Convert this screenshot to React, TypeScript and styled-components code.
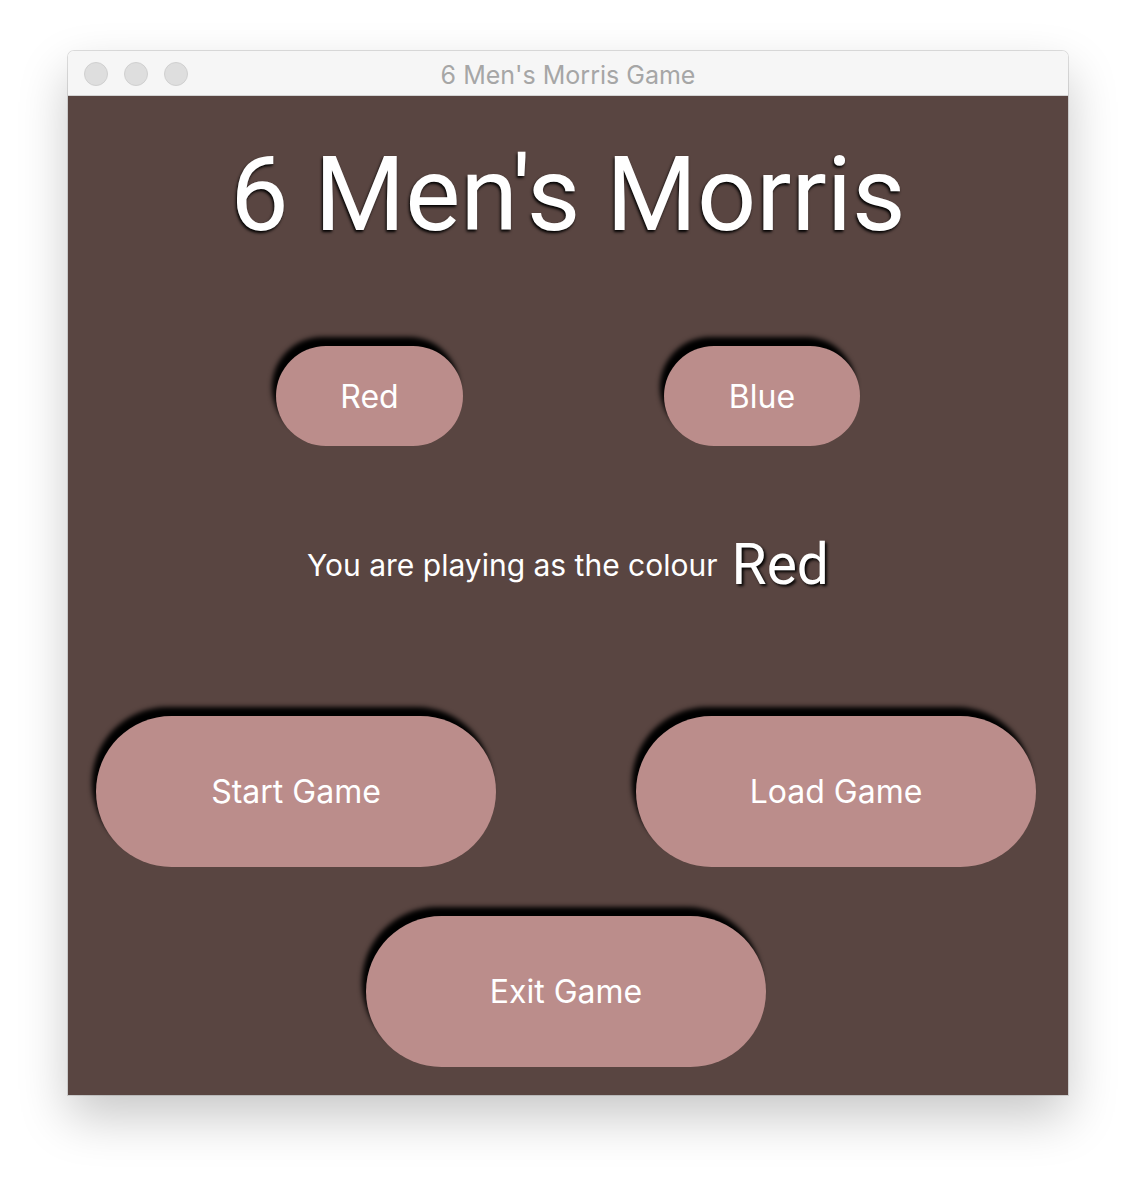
import * as React from "react";
import styled, { createGlobalStyle } from "styled-components";

const GlobalStyle = createGlobalStyle`
  html, body {
    margin: 0;
    padding: 0;
    background: #ffffff;
  }
  body {
    font-family: Inter, "Noto Sans", sans-serif;
  }
`;

const Page = styled.div`
  width: 1136px;
  height: 1180px;
  padding: 51px 0 0 68px;
  box-sizing: border-box;
`;

const Window = styled.div`
  width: 1000px;
  display: flex;
  flex-direction: column;
  border-radius: 6px 6px 0 0;
  box-shadow: 0 22px 50px rgba(0, 0, 0, 0.22), 0 0 0 1px rgba(0, 0, 0, 0.12);
`;

const TitleBar = styled.div`
  position: relative;
  height: 44px;
  display: flex;
  align-items: center;
  justify-content: center;
  background: #f6f6f6;
  border-bottom: 1px solid #d4d4d4;
  border-radius: 6px 6px 0 0;
`;

const Lights = styled.div`
  position: absolute;
  left: 16px;
  top: 11px;
  display: flex;
  gap: 16px;
`;

const Light = styled.span`
  width: 22px;
  height: 22px;
  border-radius: 50%;
  background: #dedede;
  border: 1px solid #d0d0d0;
`;

const WindowTitle = styled.div`
  font-family: Inter, sans-serif;
  font-size: 25px;
  color: #a6a6a6;
  margin-top: 3px;
`;

const Content = styled.div`
  height: 999px;
  background: #594541;
  display: flex;
  flex-direction: column;
  align-items: center;
  box-sizing: border-box;
  padding-top: 44px;
`;

const Heading = styled.h1`
  margin: 0;
  font-family: Roboto, "Liberation Sans", sans-serif;
  font-weight: 400;
  font-size: 104px;
  line-height: 110px;
  color: #ffffff;
  text-shadow: -1px 2px 3px rgba(0, 0, 0, 1);
`;

const ColourRow = styled.div`
  margin-top: 96px;
  display: flex;
  gap: 201px;
`;

const Pill = styled.button<{ $w: number; $h: number }>`
  width: ${p => p.$w}px;
  height: ${p => p.$h}px;
  border: none;
  border-radius: ${p => p.$h / 2}px;
  background: #bb8d8b;
  color: #ffffff;
  font-family: Inter, sans-serif;
  font-size: 32px;
  padding: 0;
  cursor: pointer;
  box-shadow: -4px -9px 5px #000000;
`;

const Status = styled.div`
  margin-top: 87px;
  display: flex;
  align-items: center;
  gap: 14px;
  color: #ffffff;
`;

const StatusText = styled.span`
  font-family: Inter, sans-serif;
  font-size: 30px;
`;

const StatusColour = styled.span`
  font-family: Roboto, "Liberation Sans", sans-serif;
  font-size: 57px;
  line-height: 64px;
  text-shadow: 2px 2px 3px rgba(0, 0, 0, 0.95);
`;

const GameRow = styled.div`
  margin-top: 119px;
  display: flex;
  gap: 140px;
  margin-left: -4px;
`;

const ExitRow = styled.div`
  margin-top: 49px;
  display: flex;
  margin-left: -4px;
`;

export default function App() {
  return (
    <Page>
      <GlobalStyle />
      <Window>
        <TitleBar>
          <Lights>
            <Light />
            <Light />
            <Light />
          </Lights>
          <WindowTitle>6 Men's Morris Game</WindowTitle>
        </TitleBar>
        <Content>
          <Heading>6 Men's Morris</Heading>
          <ColourRow>
            <Pill $w={187} $h={100}>Red</Pill>
            <Pill $w={196} $h={100}>Blue</Pill>
          </ColourRow>
          <Status>
            <StatusText>You are playing as the colour</StatusText>
            <StatusColour>Red</StatusColour>
          </Status>
          <GameRow>
            <Pill $w={400} $h={151}>Start Game</Pill>
            <Pill $w={400} $h={151}>Load Game</Pill>
          </GameRow>
          <ExitRow>
            <Pill $w={400} $h={151}>Exit Game</Pill>
          </ExitRow>
        </Content>
      </Window>
    </Page>
  );
}
